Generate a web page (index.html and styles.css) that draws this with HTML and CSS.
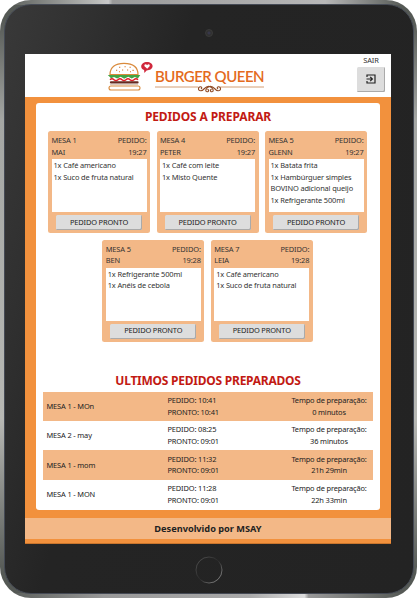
FILE: index.html
```html
<!DOCTYPE html>
<html lang="pt-BR">
<head>
<meta charset="utf-8">
<title>Burger Queen</title>
<link rel="stylesheet" href="styles.css">
</head>
<body>
<div class="tablet">
<div class="bezel">
  <div class="camera-area"><span class="camera"></span></div>
  <div class="screen">
    <header class="header">
      <div class="brand">
        <svg class="burger" width="46" height="30" viewBox="0 0 46 30" fill="none">
          <path d="M3 13.5C3 6.5 8 2.3 17 2.3s14 4.2 14 11.2z" fill="#fff" stroke="#d98a3c" stroke-width="1.2"/>
          <path d="M9 9.2h1.2M12 6.2h1.3M15 9h1.2M17.5 5.8h1.2M20 9h1.2M22.5 6.3h1.3M25.5 9.4h1.2M12 10.8h1M23 10.8h1" stroke="#d9762b" stroke-width="1.1"/>
          <path d="M.8 14h32.5l-2.400 3.400-3-1.400-3.200 1.600-3.500-1.800-4 2-3.500-2-3.500 1.800-3.200-1.600-3 1.200z" fill="#45a545"/>
          <path d="M3 18.700q2-1.800 4 0t4 0 4 0 4 0 4 0 4 0 4 0" stroke="#e02028" stroke-width="1.500"/>
          <path d="M4 21.400h26.500" stroke="#662b20" stroke-width="2.300" stroke-linecap="round"/>
          <path d="M3 23.600h28" stroke="#cbb9aa" stroke-width=".8"/>
          <rect x="2" y="25" width="31" height="4" rx="2" fill="#fff" stroke="#d98a3c" stroke-width="1.100"/>
          <path d="M40 1C36.800 1 34.200 2.900 34.200 5.400c0 1.700 1.300 3 2.900 3.700l.3 2.800 2.200-2.500c3.500 0 6-1.700 6-4.300C45.600 2.700 43.200 1 40 1z" fill="#d0283c"/>
          <path d="M40.200 7.800 37.500 5.200c-.8-1.700 1.600-2.700 2.600-.9 1-1.800 3.400-.8 2.500.9z" fill="#fff"/>
        </svg>
        <div class="wordmark">
          <span class="wordmark-text">BURGER QUEEN</span>
          <svg class="flourish" width="109" height="8" viewBox="0 0 109 8" fill="none">
            <path d="M0 2H43M65.500 2H109" stroke="#c98552" stroke-width=".8"/>
            <path d="M54.500 1.500C50 .3 49 6 45.800 5.800c-3.300-.2-2.800-4.300-.2-4 1.600.2 1.500 2 .2 2M54.500 1.500C59 .3 60 6 63.200 5.800c3.300-.2 2.800-4.300.2-4-1.600.2-1.500 2-.2 2M54.500 1.500C51 2.500 49.500 6.800 52.200 6.800c2 0 1.700-2.600.2-2.300M54.500 1.500C58 2.500 59.500 6.800 56.800 6.800c-2 0-1.700-2.600-.2-2.300" stroke="#8f4a25" stroke-width="1.100"/>
          </svg>
        </div>
      </div>
      <div class="logout">
        <span class="logout-label">SAIR</span>
        <button class="logout-button" aria-label="Sair">
          <svg width="10" height="10" viewBox="0 0 10 10" fill="none" stroke="#222" stroke-width="1.200">
            <path d="M1 3V1h8v8H1V7M.5 5h5.700M4.200 2.800 6.400 5 4.200 7.200"/>
          </svg>
        </button>
      </div>
    </header>
    <main class="panel">
      <h1 class="title">PEDIDOS A PREPARAR</h1>
      <section class="orders">
        <article class="card">
          <div class="card-head"><p>MESA 1<br>MAI</p><p class="time">PEDIDO:<br>19:27</p></div>
          <div class="items"><p>1x Café americano</p><p>1x Suco de fruta natural</p></div>
          <button class="ready">PEDIDO PRONTO</button>
        </article>
        <article class="card">
          <div class="card-head"><p>MESA 4<br>PETER</p><p class="time">PEDIDO:<br>19:27</p></div>
          <div class="items"><p>1x Café com leite</p><p>1x Misto Quente</p></div>
          <button class="ready">PEDIDO PRONTO</button>
        </article>
        <article class="card">
          <div class="card-head"><p>MESA 5<br>GLENN</p><p class="time">PEDIDO:<br>19:27</p></div>
          <div class="items"><p>1x Batata frita</p><p>1x Hambúrguer simples<br>BOVINO adicional queijo</p><p>1x Refrigerante 500ml</p></div>
          <button class="ready">PEDIDO PRONTO</button>
        </article>
        <article class="card">
          <div class="card-head"><p>MESA 5<br>BEN</p><p class="time">PEDIDO:<br>19:28</p></div>
          <div class="items"><p>1x Refrigerante 500ml</p><p>1x Anéis de cebola</p></div>
          <button class="ready">PEDIDO PRONTO</button>
        </article>
        <article class="card">
          <div class="card-head"><p>MESA 7<br>LEIA</p><p class="time">PEDIDO:<br>19:28</p></div>
          <div class="items"><p>1x Café americano</p><p>1x Suco de fruta natural</p></div>
          <button class="ready">PEDIDO PRONTO</button>
        </article>
      </section>
      <h2 class="title title-done">ULTIMOS PEDIDOS PREPARADOS</h2>
      <section class="history">
        <div class="row"><p>MESA 1 - MOn</p><p>PEDIDO: 10:41<br>PRONTO: 10:41</p><p class="duration">Tempo de preparação:<br>0 minutos</p></div>
        <div class="row"><p>MESA 2 - may</p><p>PEDIDO: 08:25<br>PRONTO: 09:01</p><p class="duration">Tempo de preparação:<br>36 minutos</p></div>
        <div class="row"><p>MESA 1 - mom</p><p>PEDIDO: 11:32<br>PRONTO: 09:01</p><p class="duration">Tempo de preparação:<br>21h 29min</p></div>
        <div class="row"><p>MESA 1 - MON</p><p>PEDIDO: 11:28<br>PRONTO: 09:01</p><p class="duration">Tempo de preparação:<br>22h 33min</p></div>
      </section>
    </main>
    <footer class="footer">Desenvolvido por MSAY</footer>
  </div>
  <div class="home-area">
    <svg width="28" height="28" viewBox="0 0 28 28" fill="none" stroke-width="1">
      <defs><linearGradient id="ring" x1="0" y1="0" x2="1" y2="1"><stop offset="0" stop-color="#555"/><stop offset=".5" stop-color="#2b2b2b"/><stop offset="1" stop-color="#999"/></linearGradient></defs>
      <circle cx="14" cy="14" r="13" stroke="url(#ring)"/>
    </svg>
  </div>
</div>
</div>
</body>
</html>
```
FILE: styles.css
```css
* { box-sizing: border-box; }
body {
  margin: 0;
  background: #fff;
  font-family: "Noto Sans", "Open Sans", sans-serif;
  font-size: 7.450px;
  line-height: 11.600px;
  letter-spacing: -.15px;
  color: #333;
}
p, h1, h2 { margin: 0; }
.tablet {
  width: 417px;
  height: 598px;
  padding: 4px 3px 4px 4px;
  border-radius: 31px;
  background:
    linear-gradient(90deg, #555955 0, #b9bab8 23%, #c9c9c9 26%, #999 27%, #b7b7b7 78%, #555955 97%) top / 100% 5px no-repeat,
    linear-gradient(90deg, #555955 0, #999 25%, #aaa 60%, #ddd 73%, #999 74%, #555955 97%) bottom / 100% 5px no-repeat,
    linear-gradient(#555955 3%, #a5a7a4 20%, #b7b8b4 70%, #555955 96%);
}
.bezel {
  height: 590px;
  border: 1px solid #454a55;
  border-radius: 27px;
  background: linear-gradient(105deg, #393939 0, #303030 16%, #242424 34%, #232323 100%);
}
.camera-area { height: 49px; padding-top: 24px; }
.camera {
  display: block;
  width: 8px;
  height: 8px;
  margin: 0 auto;
  border: 1px solid #3a3a3a;
  border-radius: 50%;
  background: radial-gradient(#37374a 25%, #303030 45%);
}
.screen {
  width: 366px;
  height: 490px;
  margin-left: 20px;
  background: #f2913d;
  border-bottom: 1px solid #c9752d;
}
.header {
  display: flex;
  justify-content: space-between;
  height: 42.500px;
  padding: 0 6px 0 82px;
  background: #fff;
}
.brand { display: flex; padding-top: 7px; }
.wordmark { padding-left: 2px; }
.wordmark-text {
  display: block;
  height: 24px;
  font: 600 15px/30px Lato, sans-serif;
  letter-spacing: -.5px;
  color: #e46b1d;
  white-space: nowrap;
}
.flourish { display: block; }
.logout {
  display: flex;
  flex-direction: column;
  align-items: center;
}
.logout-label { height: 12.500px; line-height: 13px; }
.logout-button {
  display: grid;
  place-items: center;
  width: 28px;
  height: 25px;
  padding: 0;
  border: 0;
  border-radius: 1.500px;
  background: #ddd;
  box-shadow: inset -1px -1px #aaa;
}
.panel {
  width: 344px;
  height: 406.500px;
  margin: 6.500px 0 8px 11px;
  padding-top: 4px;
  border-radius: 3px;
  background: #fff;
}
.title {
  height: 24px;
  font-size: 12px;
  line-height: 20px;
  font-weight: 700;
  letter-spacing: -.12px;
  text-align: center;
  color: #c21a13;
}
.orders {
  display: flex;
  flex-wrap: wrap;
  justify-content: center;
  align-content: flex-start;
  gap: 6.500px;
  height: 238.500px;
  margin-right: 1px;
}
.card {
  width: 102px;
  height: 102px;
  padding: 4px 3.500px 0;
  border-radius: 2.500px;
  background: #f3b887;
}
.card-head { display: flex; justify-content: space-between; height: 24px; }
.time { text-align: right; }
.items { height: 53px; padding: 1px 2px; background: #fff; white-space: nowrap; }
.ready {
  display: block;
  width: 86px;
  height: 15px;
  margin: 3px 0 0 4.500px;
  padding: 0;
  border: 0;
  border-radius: 1.500px;
  background: #ddd;
  box-shadow: inset -1px -1px #aaa;
  font: inherit;
  letter-spacing: inherit;
  color: #222;
}
.title-done { height: 22px; line-height: 21.500px; letter-spacing: -.24px; }
.history { width: 330px; margin-left: 7px; color: #222; }
.row {
  display: grid;
  grid-template-columns: 121px 118px 87px;
  align-items: center;
  height: 29.400px;
  padding: 1px 0 0 3.500px;
}
.row:nth-child(odd) { background: #f3b887; }
.duration { text-align: center; white-space: nowrap; }
.footer {
  height: 21.500px;
  background: #f3b887;
  font-size: 9.200px;
  font-weight: 700;
  letter-spacing: 0;
  line-height: 21px;
  text-align: center;
  color: #222;
}
.home-area { display: flex; justify-content: center; padding-top: 12px; }
```
